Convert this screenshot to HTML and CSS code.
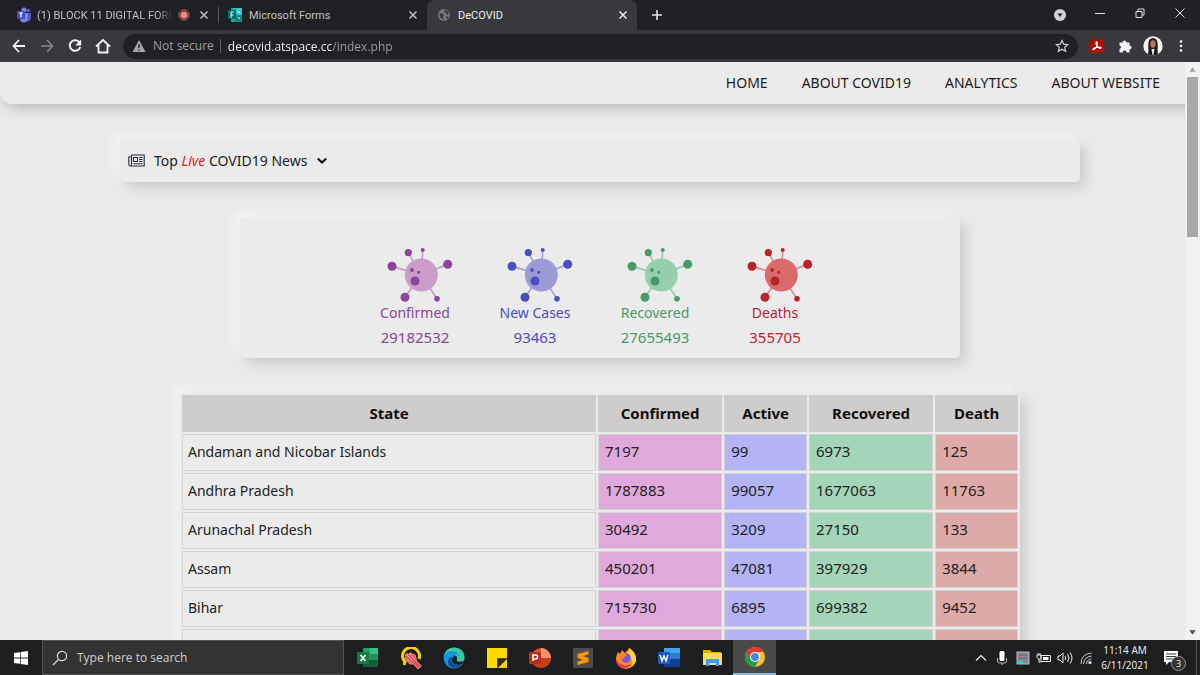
FILE: index.html
```html
<!DOCTYPE html>
<html lang="en">
<head>
<meta charset="utf-8">
<title>DeCOVID</title>
<link rel="stylesheet" href="styles.css">
</head>
<body>
<svg class="defs" aria-hidden="true">
  <symbol id="close" viewBox="0 0 10 10"><path d="M1.5 1.5l7 7M8.5 1.5l-7 7" stroke="currentColor" stroke-width="1.5"/></symbol>
  <symbol id="virus" viewBox="-10 0 76 56">
    <g stroke="currentColor" stroke-width="1.5" opacity=".5"><path d="M5 19.3L34 28M21.3 5.700L34 28M35.700 3L34.500 28M60.700 17.300L34 28M18 50.300L34 28M50 51.700L34 28" fill="none"/></g>
    <circle class="virus-body" cx="34.3" cy="28" r="16.5"/>
    <g fill="currentColor"><circle cx="5" cy="19.3" r="4.500"/><circle cx="21.300" cy="5.700" r="3.600"/><circle cx="35.700" cy="3" r="2"/><circle cx="60.700" cy="17.300" r="4.500"/><circle cx="18" cy="50.300" r="4.500"/><circle cx="50" cy="51.700" r="2.800"/><circle cx="28" cy="34" r="4.500"/><circle cx="25" cy="23" r="1.900"/><circle cx="31.700" cy="25.300" r="1.500"/></g>
  </symbol>
</svg>
<div class="window">
  <header class="tabs">
    <div class="tab">
      <svg class="i16" viewBox="0 0 16 16"><circle cx="12.500" cy="3.500" r="1.700" fill="#5b62c8"/><circle cx="8" cy="3" r="2.600" fill="#7b83eb"/><path d="M9 6h6v5a3 3 0 0 1-4 3z" fill="#5059c9"/><path d="M4 6h8v5a4 4 0 0 1-8 1z" fill="#7b83eb"/><rect x="1" y="4" width="8" height="8" rx="1" fill="#464eb8"/><path d="M3 6h4M5 6v4.500" stroke="#fff" stroke-width="1.200"/></svg>
      <span class="tab-title fade">(1) BLOCK 11 DIGITAL FOREN</span>
      <svg class="i12" viewBox="0 0 12 12"><circle cx="6" cy="6" r="5" fill="none" stroke="#e8635c"/><circle cx="6" cy="6" r="3.500" fill="#f28b82"/></svg>
      <button class="plain" aria-label="Close tab"><svg class="i10"><use href="#close"/></svg></button>
    </div>
    <div class="tab second">
      <svg class="i16" viewBox="0 0 16 16"><rect x="4" y="1" width="11" height="14" rx="1" fill="#1fb0a9"/><path d="M9 1h6v7H9z" fill="#37c6d0"/><path d="M9 8h6v7H7z" fill="#128987"/><rect x="1" y="3" width="8" height="9" rx="1" fill="#036c70"/><path d="M7 5H4v6M4 8h2.500M11 4l2 2M11 10l2 2" fill="none" stroke="#dff" stroke-width="1"/></svg>
      <span class="tab-title">Microsoft Forms</span>
      <button class="plain" aria-label="Close tab"><svg class="i10"><use href="#close"/></svg></button>
    </div>
    <div class="tab active">
      <svg class="i14" viewBox="0 0 14 14"><circle cx="7" cy="7" r="6" fill="#75797e"/><path d="M2 6l3-1 2 2-1 2 1 3-3-2zM7 2l4 1 1 3-2 1-1-2-2-1zM9 8l3 1-2 3z" fill="#393a3e"/></svg>
      <span class="tab-title">DeCOVID</span>
      <button class="plain" aria-label="Close tab"><svg class="i10"><use href="#close"/></svg></button>
    </div>
    <button class="plain new-tab" aria-label="New tab"><svg class="i12" viewBox="0 0 12 12"><path d="M6 1v10M1 6h10" stroke="currentColor" stroke-width="1.600"/></svg></button>
    <div class="win-controls">
      <button class="plain search-tabs" aria-label="Search tabs"><svg class="i14" viewBox="0 0 14 14"><circle cx="7" cy="7" r="6" fill="#ced1d6"/><path d="M4.500 5.500h5L7 9z" fill="#202124"/></svg></button>
      <button class="plain" aria-label="Minimize"><svg class="i10" viewBox="0 0 10 10"><path d="M0 5.500h10" stroke="currentColor"/></svg></button>
      <button class="plain" aria-label="Restore"><svg class="i10" viewBox="0 0 10 10"><path d="M1 3.500h6v6H1zM3 3V1h6v6H7" fill="none" stroke="currentColor"/></svg></button>
      <button class="plain" aria-label="Close"><svg class="i10" viewBox="0 0 10 10"><path d="M.5.5l9 9M9.500.5l-9 9" stroke="currentColor"/></svg></button>
    </div>
  </header>
  <div class="toolbar">
    <button class="plain" aria-label="Back"><svg class="i16" viewBox="0 0 16 16"><path d="M14 8H3M8 2L2.500 8 8 14" fill="none" stroke="#f1f3f4" stroke-width="1.800"/></svg></button>
    <button class="plain" aria-label="Forward"><svg class="i16" viewBox="0 0 16 16"><path d="M2 8h11M8 2l5.500 6L8 14" fill="none" stroke="#85878b" stroke-width="1.600"/></svg></button>
    <button class="plain" aria-label="Reload"><svg class="i16" viewBox="0 0 16 16"><path d="M12.500 4.500A5.300 5.300 0 1 0 13.200 9" fill="none" stroke="#f1f3f4" stroke-width="2"/><path d="M14.200 1.500v6h-6z" fill="#f1f3f4"/></svg></button>
    <button class="plain" aria-label="Home"><svg class="i16" viewBox="0 0 16 16"><path d="M1 8.500L8 2l7 6.500M3.500 7v7.500h9V7" fill="none" stroke="#f1f3f4" stroke-width="1.800"/></svg></button>
    <form class="omnibox">
      <svg class="i14" viewBox="0 0 14 14"><path d="M7 1l6.500 12H.5z" fill="#a3a6aa"/><path d="M7 5v4M7 10.200v1.500" stroke="#202124" stroke-width="1.300"/></svg>
      <label for="url">Not secure</label>
      <input id="url" type="text" value="decovid.atspace.cc/index.php">
      <button type="button" class="plain" aria-label="Bookmark"><svg class="i14" viewBox="0 0 14 14"><path d="M7 1.500l1.700 3.700 4 .4-3 2.700.9 4L7 10.200l-3.600 2.100.9-4-3-2.700 4-.4z" fill="none" stroke="#d0d2d6" stroke-width="1.200"/></svg></button>
    </form>
    <div class="extensions">
      <button class="plain" aria-label="Acrobat"><svg class="i14" viewBox="0 0 14 14"><rect width="14" height="14" rx="2" fill="#b30b00"/><path d="M6.500 3c1-.6 1 1.800.4 3.800C6.200 9 4 11 3 10.500c-.6-.8 2.500-2.200 5-2.400 2-.2 3.500.3 3 1-.6.800-3-.6-4.200-2.300C6 5.300 6 3.500 6.500 3z" fill="none" stroke="#fff" stroke-width="1.200"/></svg></button>
      <button class="plain" aria-label="Extensions"><svg class="i14" viewBox="0 0 14 14"><path d="M1.500 3.500H4.500a2 2 0 1 1 4 0H11.500V6.500a2 2 0 1 1 0 4V13.500H8.500a1.900 1.900 0 0 0-3.800 0H1.500V10a1.800 1.800 0 0 0 0-3.500z" fill="#f1f3f4"/></svg></button>
      <button class="plain" aria-label="Profile"><svg class="i20" viewBox="0 0 20 20"><circle cx="10" cy="10" r="9.700" fill="#f4f5f3"/><path d="M5.500 16C4.500 5 6 2 10 2s5.500 3 4.500 14z" fill="#2d211e"/><ellipse cx="10" cy="8" rx="2.600" ry="3.700" fill="#b77b5c"/><path d="M5 18c.5-4 2-5 5-5s4.500 1 5 5c-3 2.300-7 2.300-10 0z" fill="#17191e"/><path d="M8.500 13h3L10.500 19h-1z" fill="#eee"/></svg></button>
      <button class="plain" aria-label="Menu"><svg class="i14" viewBox="0 0 14 14"><g fill="#f1f3f4"><circle cx="7" cy="2.500" r="1.300"/><circle cx="7" cy="7" r="1.300"/><circle cx="7" cy="11.500" r="1.300"/></g></svg></button>
    </div>
  </div>

  <div class="viewport">
    <nav class="site-nav">
      <a href="#">HOME</a><a href="#">ABOUT COVID19</a><a href="#">ANALYTICS</a><a href="#">ABOUT WEBSITE</a>
    </nav>
    <main>
      <button class="panel news">
        <svg class="newspaper" viewBox="0 0 17 13"><path d="M3.500 1h12.700v11H2.200Q.8 12 .8 10.500V3h2.500M3.500 1v9.500q0 1.300-1.200 1.500M5.500 3.500h4v4h-4zM11 3.500h3.500M11 5.500h3.500M11 7.500h3.500M5.500 9.700h9" fill="none" stroke="#27313d" stroke-width="1.100"/></svg>
        <span>Top <em>Live</em> COVID19 News</span>
        <svg class="i12" viewBox="0 0 12 12"><path d="M1.800 4.500L6 8.500l4.200-4" fill="none" stroke="#111" stroke-width="2.200"/></svg>
      </button>
      <section class="panel stats">
        <div class="stat confirmed"><svg><use href="#virus"/></svg><span>Confirmed</span><span class="count">29182532</span></div>
        <div class="stat new"><svg><use href="#virus"/></svg><span>New Cases</span><span class="count">93463</span></div>
        <div class="stat recovered"><svg><use href="#virus"/></svg><span>Recovered</span><span class="count">27655493</span></div>
        <div class="stat deaths"><svg><use href="#virus"/></svg><span>Deaths</span><span class="count">355705</span></div>
      </section>
      <table class="states">
        <colgroup><col class="c-state"><col class="c-wide"><col class="c-small"><col class="c-wide"><col class="c-small"></colgroup>
        <thead><tr><th>State</th><th>Confirmed</th><th>Active</th><th>Recovered</th><th>Death</th></tr></thead>
        <tbody>
          <tr><td>Andaman and Nicobar Islands</td><td>7197</td><td>99</td><td>6973</td><td>125</td></tr>
          <tr><td>Andhra Pradesh</td><td>1787883</td><td>99057</td><td>1677063</td><td>11763</td></tr>
          <tr><td>Arunachal Pradesh</td><td>30492</td><td>3209</td><td>27150</td><td>133</td></tr>
          <tr><td>Assam</td><td>450201</td><td>47081</td><td>397929</td><td>3844</td></tr>
          <tr><td>Bihar</td><td>715730</td><td>6895</td><td>699382</td><td>9452</td></tr>
          <tr><td></td><td></td><td></td><td></td><td></td></tr>
        </tbody>
      </table>
    </main>
    <div class="scrollbar">
      <svg viewBox="0 0 14 14"><path d="M4 9l3-4 3 4z" fill="#a3a3a3"/></svg>
      <div class="thumb"></div>
      <svg viewBox="0 0 14 14"><path d="M4 5l3 4 3-4z" fill="#505050"/></svg>
    </div>
  </div>

  <footer class="taskbar">
    <button class="plain start" aria-label="Start"><svg class="i14" viewBox="0 0 14 14"><path d="M0 2l6-.8v5.400H0zM6.700 1L14 0v6.600H6.700zM0 7.400h6v5.400L0 12zM6.700 7.400H14V14l-7.300-1z" fill="#fff"/></svg></button>
    <label class="search">
      <svg class="i16" viewBox="0 0 16 16"><circle cx="10" cy="6" r="4.600" fill="none" stroke="#ddd" stroke-width="1.200"/><path d="M6.500 9.500L1 15" stroke="#ddd" stroke-width="1.300"/></svg>
      <input type="text" placeholder="Type here to search" aria-label="Search">
    </label>
    <div class="apps">
      <button class="plain" aria-label="Excel"><svg viewBox="0 0 22 22"><rect x="6" y="1" width="15" height="19" rx="1" fill="#21a366"/><path d="M13 1h8v6h-8z" fill="#33c481"/><path d="M13 7h8v6h-8z" fill="#189457"/><path d="M6 13h15v7H6z" fill="#185c37"/><rect x="0" y="5" width="12" height="12" rx="1" fill="#107c41"/><path d="M3.500 8l5 6M8.500 8l-5 6" stroke="#fff" stroke-width="1.700"/></svg></button>
      <button class="plain" aria-label="Gesture tool"><svg viewBox="0 0 22 22"><path d="M4 18l1-3A8.500 8.500 0 1 1 19 12" fill="none" stroke="#f4d400" stroke-width="3"/><path d="M5.500 7.500Q6.500 6 8 7l1 .5Q9.500 5 11.500 6L13 7.500Q15 7 15.500 9l1 5 5 5-3.500 3-4.500-5H10L5 12.500q-.8-1.500 1-1.700L5.500 7.500z" fill="#e8505b" stroke="#f7a5a5" stroke-width=".8"/><path d="M7 8l6 6M10 7l5 6M6.500 11.500l4 3.500" stroke="#fac4c4" stroke-width=".8"/></svg></button>
      <button class="plain" aria-label="Edge"><svg viewBox="0 0 22 22"><circle cx="11" cy="11" r="10.500" fill="#1375c9"/><path d="M1 9C3-3 22-2 21.500 11c0 4-6 5-8 2.500 2-3-1-7-5-6C4.500 7.500 2 8 1 9z" fill="#3ac8a0"/><path d="M1 10C4 1 16 3 16 10c-2-4-6-3-7 0-2 6 4 9 10 7-6 7-18 4-18-7z" fill="#1595df"/><path d="M9 10c-3 6 4 10 10 7-5 6-14 4-14-2 0-3 2-5 4-5z" fill="#0c4c94"/><path d="M13 9c2 2 0 4 1 5 2 1.500 5 1 7 0l-2 3c-6 2-11-1-10-5 1-2 2-3 4-3z" fill="#1d1e20"/></svg></button>
      <button class="plain" aria-label="Sticky Notes"><svg viewBox="0 0 22 22"><path d="M1 1h20v11l-9 9H1z" fill="#ffd900"/><path d="M11 11h10v10H11z" fill="#4c4c4c"/><path d="M12 21v-9h9z" fill="#2d2d2d"/><path d="M12 21l9-9v9z" fill="#ffcb19"/></svg></button>
      <button class="plain" aria-label="PowerPoint"><svg viewBox="0 0 22 22"><circle cx="12" cy="11" r="10" fill="#d35230"/><path d="M12 1a10 10 0 0 1 10 10H12z" fill="#ff8f6b"/><path d="M2 11h20a10 10 0 0 1-20 0z" fill="#c43e1c"/><rect y="5" width="12" height="12" rx="1" fill="#b7301c"/><path d="M4 14V8h2.500a2 2 0 0 1 0 4H4" fill="none" stroke="#fff" stroke-width="1.500"/></svg></button>
      <button class="plain" aria-label="Sublime Text"><svg viewBox="0 0 22 22"><rect x="1" y="1" width="20" height="20" rx="1" fill="#4b4b4b"/><path d="M5.500 7l11-3v3.500L11 9l5.500 2v4l-11 3v-3.500L11 13l-5.500-2z" fill="#ff9800"/></svg></button>
      <button class="plain" aria-label="Firefox"><svg viewBox="0 0 22 22"><path d="M3 5l2 2 2-4 3 3c1-2 3-2 4-5 3 2 7 6 7 11a10 10 0 0 1-20 0c0-3 1-5 2-7z" fill="#ff8a24"/><path d="M14 1c5 3 8 8 7 13-1 3-3 5-5 6 3-7-1-9-4-14 1-1 2-2 2-5z" fill="#ffd23c"/><path d="M1.500 12c2 6 8 8 15 5-4 7-15 5-15-5z" fill="#f23556"/><circle cx="11" cy="11" r="4.800" fill="#8155d9"/><path d="M4 7l5-1 3 2-3 2-1 3z" fill="#ff8127"/></svg></button>
      <button class="plain" aria-label="Word"><svg viewBox="0 0 22 22"><rect x="6" y="1" width="16" height="19" rx="1" fill="#2b7cd3"/><path d="M6 1h16v5H6z" fill="#41a5ee"/><path d="M6 12h16v8H6z" fill="#123f91"/><rect y="5" width="12" height="12" rx="1" fill="#185abd"/><path d="M2 8l2 6 2-5 2 5 2-6" fill="none" stroke="#fff" stroke-width="1.400"/></svg></button>
      <button class="plain" aria-label="File Explorer"><svg viewBox="0 0 22 22"><path d="M2 3h7l2 2h9v13H2z" fill="#e8a90c"/><path d="M2 6h19v12H2z" fill="#ffd767"/><path d="M5 19v-7h13v7h-3v-3H8v3z" fill="#3f9edb"/></svg></button>
      <button class="plain current" aria-label="Chrome"><svg viewBox="0 0 22 22"><circle cx="11" cy="11" r="10" fill="#fbc02d"/><path d="M2.300 6A10 10 0 0 1 19.700 6H11l-4.300 7.500z" fill="#e33b2e"/><path d="M2.300 6a10 10 0 0 0 8.700 15l4.300-7.500-8.600 0z" fill="#279a4b"/><circle cx="11" cy="11" r="5" fill="#fff"/><circle cx="11" cy="11" r="3.900" fill="#4285f4"/></svg></button>
    </div>
    <div class="tray">
      <svg viewBox="0 0 16 16"><path d="M3 10.500L8 5.500l5 5" fill="none" stroke="#eee" stroke-width="1.200"/></svg>
      <svg viewBox="0 0 16 16"><rect x="5.500" y="1" width="5" height="10" rx="1.500" fill="#fff"/><path d="M3.500 8v3q0 2 2 2h5q2 0 2-2V8M8 13v2" fill="none" stroke="#bbb"/></svg>
      <svg viewBox="0 0 16 16"><rect x="2" y="2" width="12" height="12" fill="#858b91" stroke="#b7bbc0"/><path d="M4 5h8M4 8h8" stroke="#5d6268"/><path d="M3 11h5v2H3z" fill="#25cfe0"/></svg>
      <svg viewBox="0 0 16 16"><path d="M5 5.500h9.500v6H5zM1 5h4v2.500L3 9.500 1 7.500zM2 5V3M4 5V3M3 9v3h2" fill="none" stroke="#eee"/><path d="M7 7h5.500v3H7z" fill="#fff"/></svg>
      <svg viewBox="0 0 16 16"><path d="M1 6h2l3-3v10l-3-3H1zM8 6q1.500 2 0 4M10.500 4q3 4 0 8M13 2.500q4 5.500 0 11" fill="none" stroke="#eee"/></svg>
      <svg viewBox="0 0 16 16"><path d="M3 14Q3 4 13.500 3M5.500 14Q6 7 13.500 6M8.500 14q0-4.500 5-5" fill="none" stroke="#ccc"/><circle cx="12" cy="12.500" r="1.600" fill="#fff"/></svg>
      <div class="clock"><span>11:14 AM</span><span>6/11/2021</span></div>
      <button class="plain notify" aria-label="3 notifications"><svg viewBox="0 0 16 16"><path d="M1 1h14v11H6l-3 3v-3H1z" fill="#fff"/><path d="M3 4h10M3 6.500h10M3 9h7" stroke="#333"/></svg><span class="badge">3</span></button>
    </div>
  </footer>
</div>
</body>
</html>
```
FILE: styles.css
```css
* { box-sizing: border-box; }
body {
  margin: 0;
  font-family: "Noto Sans", "Open Sans", sans-serif;
  font-size: 14px;
  color: #222;
  background: #eaeaea;
}
.defs { position: absolute; width: 0; height: 0; }
svg { display: block; flex: none; }
.i10 { width: 10px; height: 10px; }
.i12 { width: 12px; height: 12px; }
.i14 { width: 14px; height: 14px; }
.i16 { width: 16px; height: 16px; }
.i20 { width: 20px; height: 20px; }
.plain {
  display: flex;
  align-items: center;
  justify-content: center;
  padding: 0;
  border: 0;
  background: none;
  color: inherit;
  font: inherit;
}
.window { display: flex; flex-direction: column; height: 100vh; }

/* Browser tabs */
.tabs { display: flex; height: 30px; background: #202124; color: #dfe1e5; font-family: Roboto, sans-serif; font-size: 11px; }
.tab { display: flex; align-items: center; gap: 6px; flex: 0 1 218px; min-width: 0; padding: 0 9px 0 16px; color: #bdc1c6; }
.tab.second { flex-basis: 209px; padding-left: 9px; gap: 6px; background: linear-gradient(#55585c, #55585c) no-repeat 0 7px / 1px 16px; }
.tab.active { flex-basis: 210px; padding-left: 10px; gap: 7px; background: #38393d; border-radius: 8px 8px 0 0; color: #eee; }
.tab-title { flex: 1; min-width: 0; white-space: nowrap; }
.tab:first-child { gap: 5px; }
.tab .i12 + .plain { margin-left: 4px; }
.fade { -webkit-mask-image: linear-gradient(90deg, #000 88%, transparent); mask-image: linear-gradient(90deg, #000 88%, transparent); }
.new-tab { width: 40px; }
.win-controls { display: flex; margin-left: auto; }
.win-controls .plain { width: 40px; height: 26px; }
.win-controls .search-tabs { height: 30px; }
.toolbar { display: flex; align-items: center; height: 32px; background: #38393d; font-family: "Open Sans", sans-serif; padding-left: 5px; }
.toolbar > .plain { width: 28px; height: 28px; }
.omnibox { display: flex; align-items: center; flex: 1; height: 25px; margin-left: 6px; padding: 0 9px; border-radius: 13px; background: #202124; color: #9aa0a6; font-size: 12px; gap: 7px; }
.omnibox label { padding-right: 6px; border-right: 1px solid #5c5f63; line-height: 14px; }
.omnibox input {
  flex: 1;
  min-width: 0;
  padding: 0;
  border: 0;
  outline: 0;
  font: inherit;
  background: linear-gradient(90deg, #fff 103px, #9aa0a6 103px);
  -webkit-background-clip: text;
  background-clip: text;
  -webkit-text-fill-color: transparent;
}
.extensions { display: flex; justify-content: space-between; padding: 0 5px; }
.extensions .plain { width: 28px; }

/* Page */
.viewport { position: relative; flex: 1; min-height: 0; overflow: hidden; background: #eaeaea; }
.site-nav {
  display: flex;
  align-items: center;
  justify-content: flex-end;
  gap: 34px;
  height: 42px;
  padding: 0 40px 2px 0;
  border-radius: 0 0 12px 12px;
  background: #ebebeb;
  box-shadow: 4px 4px 14px #b4b6b6;
}
.site-nav a { color: #1c1c1c; text-decoration: none; }
main { display: flex; flex-direction: column; align-items: center; gap: 36px; padding-top: 36px; }
.panel { border: 0; border-radius: 4px; background: #ebebeb; box-shadow: 6px 6px 12px #cbcdcd, -6px -6px 10px #f4f4f4; }
.news { display: flex; align-items: center; width: 80%; height: 42px; padding: 0 8px 2px; gap: 9px; font: inherit; color: #222; }
.newspaper { width: 17px; height: 13px; }
.news em { color: #e02228; }
.stats { display: grid; grid-template-columns: repeat(4, 120px); justify-content: center; width: 60%; padding: 29px 10px 9px 0; }
.stat { display: flex; flex-direction: column; align-items: center; line-height: 24px; }
.stat svg { width: 76px; height: 56px; margin-bottom: -2px; }
.count { font-size: 15px; }
.confirmed { --body: #cb9bc9; color: #8b459b; }
.new { --body: #9b9bd5; color: #4d4dc4; }
.recovered { --body: #96cfad; color: #479b6b; }
.deaths { --body: #d96c6b; color: #b92329; }
.virus-body { fill: var(--body); }
.states { width: 70%; margin-top: -1px; table-layout: fixed; border-spacing: 2px; background: #ebebeb; box-shadow: 6px 6px 12px #cbcdcd, -6px -6px 10px #f4f4f4; }
.c-state { width: 50%; }
.c-wide { width: 15%; }
.c-small { width: 10%; }
.states th, .states td { height: 37px; padding: 0 6px 2px; line-height: 20px; }
.states th { background: #cfcccc; color: #111; font-size: 15px; }
.states td { border: 1px solid #d3d3d3; padding-bottom: 3px; font-size: 15px; }
.states td:first-child { padding: 0 5px 2px; font-size: 14px; }
.states td:nth-child(2) { background: #e0a9dc; }
.states td:nth-child(3) { background: #b3b3f5; }
.states td:nth-child(4) { background: #a5d5b8; }
.states td:nth-child(5) { background: #deaaa9; }
.scrollbar { position: absolute; top: 0; right: 0; bottom: 0; display: flex; flex-direction: column; width: 15px; background: #f1f1f1; }
.scrollbar svg { width: 15px; height: 15px; }
.thumb { height: 160px; margin: 0 2px auto; background: #a8a8a8; }

/* Taskbar */
.taskbar { display: flex; height: 35px; background: #1d1e1f; color: #f1f1f1; font-family: "Open Sans", sans-serif; }
.start { width: 42px; }
.search { display: flex; align-items: center; gap: 9px; width: 302px; padding-left: 9px; border: 1px solid #555; background: #333; }
.search input { flex: 1; min-width: 0; padding: 0; border: 0; outline: 0; background: none; color: #eee; font: inherit; font-size: 12px; }
.search input::placeholder { color: #cfcfcf; }
.apps { display: flex; margin-left: 2px; }
.apps .plain { width: 43px; }
.apps svg { width: 22px; height: 22px; }
.apps .current { background: #4a4a4b; border-bottom: 2px solid #86b8dc; }
.tray { display: flex; align-items: center; gap: 5px; margin-left: auto; padding-right: 3px; }
.tray svg { width: 16px; height: 16px; }
.clock { display: flex; flex-direction: column; align-items: center; width: 52px; font-size: 10px; line-height: 15px; }
.notify { position: relative; width: 41px; height: 35px; padding-right: 10px; border-right: 1px solid #555; }
.badge { position: absolute; left: 15px; top: 16px; width: 15px; height: 15px; border: 1px solid #999; border-radius: 50%; background: #333; font-size: 9px; line-height: 13px; text-align: center; }
```
